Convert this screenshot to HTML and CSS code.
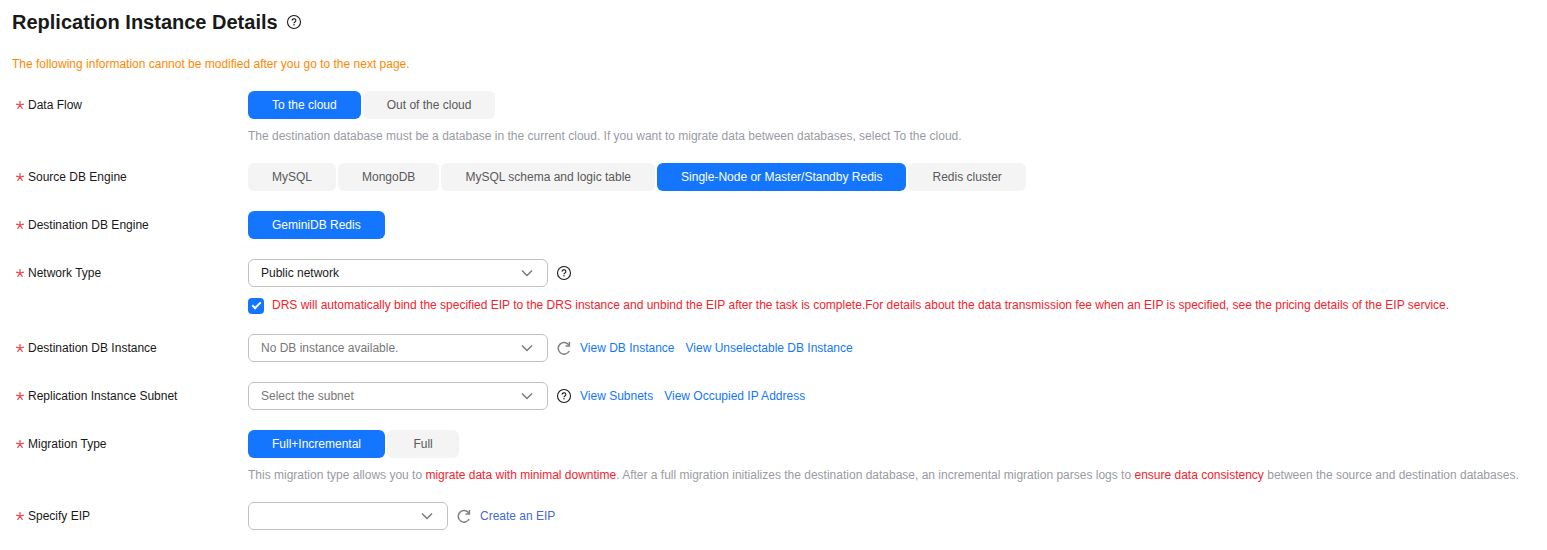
FILE: index.html
```html
<!DOCTYPE html>
<html lang="en">
<head>
	<meta charset="UTF-8">
	<title>Replication Instance Details</title>
	<link rel="stylesheet" href="styles.css">
</head>
<body>

	<!-- shared icons -->
	<svg class="sprite" aria-hidden="true">
		<symbol id="help" viewBox="0 0 16 16">
			<circle cx="8" cy="8" r="6.5" fill="none" stroke="currentColor" stroke-width="1.1"/>
			<path d="M6.1 6.6a1.9 1.7 0 1 1 2.8 1.4c-.6.35-.9.6-.9 1.3" fill="none" stroke="currentColor" stroke-width="1.1"/>
			<rect x="7.4" y="10.1" width="1.2" height="1.3" fill="currentColor"/>
		</symbol>
		<symbol id="refresh" viewBox="0 0 16 16">
			<path d="M13.2 11A5.8 5.8 0 1 1 12.9 5.2" fill="none" stroke="currentColor" stroke-width="1.5"/>
			<path d="M13.4 2v3.9H9.6" fill="none" stroke="currentColor" stroke-width="1.5"/>
		</symbol>
		<symbol id="arrow" viewBox="0 0 12 12">
			<path d="M1 3.5l5 5 5-5" fill="none" stroke="currentColor" stroke-width="1.4"/>
		</symbol>
		<symbol id="star" viewBox="0 0 8 8">
			<path d="M4 0v4M0 3.2L4 4M8 3.2L4 4M1.4 8L4 4M6.6 8L4 4" fill="none" stroke="currentColor" stroke-width="1.2"/>
		</symbol>
	</svg>

	<header class="title">
		<h1>Replication Instance Details</h1>
		<button type="button" class="icon-btn" aria-label="Help"><svg><use href="#help"/></svg></button>
	</header>
	<p class="warning">The following information cannot be modified after you go to the next page.</p>

	<form class="form">
		<div class="row">
			<div class="label" id="flowLabel"><svg class="star"><use href="#star"/></svg>Data Flow</div>
			<div class="field">
				<div class="tabs" role="group" aria-labelledby="flowLabel">
					<button type="button" class="tab active">To the cloud</button>
					<button type="button" class="tab">Out of the cloud</button>
				</div>
				<p class="hint">The destination database must be a database in the current cloud. If you want to migrate data between databases, select To the cloud.</p>
			</div>
		</div>

		<div class="row">
			<div class="label" id="sourceLabel"><svg class="star"><use href="#star"/></svg>Source DB Engine</div>
			<div class="field">
				<div class="tabs" role="group" aria-labelledby="sourceLabel">
					<button type="button" class="tab">MySQL</button>
					<button type="button" class="tab">MongoDB</button>
					<button type="button" class="tab">MySQL schema and logic table</button>
					<button type="button" class="tab active">Single-Node or Master/Standby Redis</button>
					<button type="button" class="tab">Redis cluster</button>
				</div>
			</div>
		</div>

		<div class="row">
			<div class="label" id="destLabel"><svg class="star"><use href="#star"/></svg>Destination DB Engine</div>
			<div class="field">
				<div class="tabs" role="group" aria-labelledby="destLabel">
					<button type="button" class="tab active">GeminiDB Redis</button>
				</div>
			</div>
		</div>

		<div class="row">
			<label class="label" for="network"><svg class="star"><use href="#star"/></svg>Network Type</label>
			<div class="field">
				<div class="line">
					<div class="select">
						<select id="network"><option>Public network</option></select>
						<svg class="arrow"><use href="#arrow"/></svg>
					</div>
					<button type="button" class="icon-btn" aria-label="Help"><svg><use href="#help"/></svg></button>
				</div>
				<label class="check">
					<input type="checkbox" checked>
					<span>DRS will automatically bind the specified EIP to the DRS instance and unbind the EIP after the task is complete.For details about the data transmission fee when an EIP is specified, see the pricing details of the EIP service.</span>
				</label>
			</div>
		</div>

		<div class="row">
			<label class="label" for="instance"><svg class="star"><use href="#star"/></svg>Destination DB Instance</label>
			<div class="field">
				<div class="line">
					<div class="select">
						<select id="instance" class="empty"><option>No DB instance available.</option></select>
						<svg class="arrow"><use href="#arrow"/></svg>
					</div>
					<button type="button" class="icon-btn refresh" aria-label="Refresh"><svg><use href="#refresh"/></svg></button>
					<div class="links">
						<a href="#">View DB Instance</a>
						<a href="#">View Unselectable DB Instance</a>
					</div>
				</div>
			</div>
		</div>

		<div class="row">
			<label class="label" for="subnet"><svg class="star"><use href="#star"/></svg>Replication Instance Subnet</label>
			<div class="field">
				<div class="line">
					<div class="select">
						<select id="subnet" class="empty"><option>Select the subnet</option></select>
						<svg class="arrow"><use href="#arrow"/></svg>
					</div>
					<button type="button" class="icon-btn" aria-label="Help"><svg><use href="#help"/></svg></button>
					<div class="links">
						<a href="#">View Subnets</a>
						<a href="#">View Occupied IP Address</a>
					</div>
				</div>
			</div>
		</div>

		<div class="row">
			<div class="label" id="typeLabel"><svg class="star"><use href="#star"/></svg>Migration Type</div>
			<div class="field">
				<div class="tabs" role="group" aria-labelledby="typeLabel">
					<button type="button" class="tab active">Full+Incremental</button>
					<button type="button" class="tab">Full</button>
				</div>
				<p class="hint">This migration type allows you to <span class="red">migrate data with minimal downtime</span>. After a full migration initializes the destination database, an incremental migration parses logs to <span class="red">ensure data consistency</span> between the source and destination databases.</p>
			</div>
		</div>

		<div class="row">
			<label class="label" for="eip"><svg class="star"><use href="#star"/></svg>Specify EIP</label>
			<div class="field">
				<div class="line">
					<div class="select small">
						<select id="eip"><option></option></select>
						<svg class="arrow"><use href="#arrow"/></svg>
					</div>
					<button type="button" class="icon-btn refresh" aria-label="Refresh"><svg><use href="#refresh"/></svg></button>
					<div class="links">
						<a href="#" class="create">Create an EIP</a>
					</div>
				</div>
			</div>
		</div>
	</form>

</body>
</html>
```

FILE: styles.css
```css
* {
	box-sizing: border-box;
}

body {
	margin: 0;
	padding: 8px 12px;
	background-color: #fff;
	color: #191919;
	font-family: "Liberation Sans", Arial, sans-serif;
	font-size: 12px;
	line-height: 16px;
}

.sprite {
	display: none;
}

.title {
	display: flex;
	align-items: center;
	gap: 8px;
}

h1 {
	margin: 0;
	font-size: 20px;
	line-height: 28px;
}

.warning {
	margin: 20px 0 19px;
	color: #ff8800;
}

.form {
	display: flex;
	flex-direction: column;
	gap: 20px;
}

.row {
	display: grid;
	grid-template-columns: 232px 1fr;
	padding-left: 4px;
}

.label {
	display: flex;
	align-items: center;
	gap: 4px;
	height: 28px;
}

.star {
	width: 8px;
	height: 8px;
	color: #f04848;
}

.tabs {
	display: flex;
	gap: 2px;
}

.tab {
	min-width: 72px;
	height: 28px;
	padding: 0 24px;
	border: none;
	border-radius: 6px;
	background-color: #f4f4f4;
	color: #595959;
	font: inherit;
	cursor: pointer;
}

.tab.active {
	background-color: #1476ff;
	color: #fff;
}

.hint {
	margin: 10px 0 0;
	line-height: 14px;
	color: #999ba3;
}

.red {
	color: #f5222d;
}

.line {
	display: flex;
	align-items: center;
	gap: 8px;
}

.select {
	position: relative;
	width: 300px;
}

.select.small {
	width: 200px;
}

select {
	display: block;
	width: 100%;
	height: 28px;
	padding: 0 32px 0 12px;
	border: 1px solid #c2c2c2;
	border-radius: 6px;
	background-color: #fff;
	color: #191919;
	font: inherit;
	appearance: none;
}

select.empty {
	color: #777;
}

.arrow {
	position: absolute;
	top: 8px;
	right: 15px;
	width: 12px;
	height: 12px;
	color: #777;
	pointer-events: none;
}

.icon-btn {
	display: flex;
	padding: 0;
	border: none;
	background: none;
	color: #191919;
	cursor: pointer;
}

.icon-btn svg {
	width: 16px;
	height: 16px;
}

.refresh {
	color: #808080;
}

.links {
	display: flex;
	gap: 11px;
}

a {
	color: #1476ff;
	text-decoration: none;
}

.create {
	color: #4668d6;
}

.check {
	display: flex;
	gap: 8px;
	margin-top: 11px;
	line-height: 14px;
	color: #f5222d;
}

.check input {
	display: grid;
	place-items: center;
	flex: none;
	width: 16px;
	height: 16px;
	margin: 0;
	border-radius: 4px;
	background-color: #1476ff;
	appearance: none;
}

.check input:checked::before {
	content: "";
	width: 7px;
	height: 3px;
	margin-bottom: 3px;
	border-left: 2px solid #fff;
	border-bottom: 2px solid #fff;
	transform: rotate(-45deg);
}
```
